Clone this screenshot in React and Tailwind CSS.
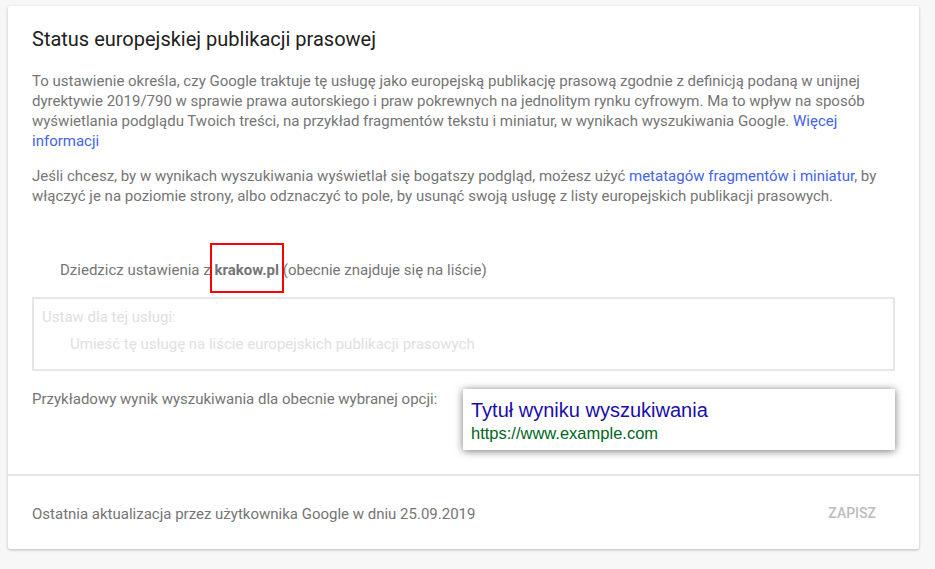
import React from "react";

function SearchPreview() {
  return (
    <div className="mt-px w-[432px] bg-white px-2 pt-[8px] pb-[7px] shadow-[0_1px_8px_rgba(0,0,0,0.55)] font-['Liberation_Sans',Arial,sans-serif]">
      <div className="text-[20px] leading-[26px] text-[#1a0dab]">Tytuł wyniku wyszukiwania</div>
      <div className="text-[16.5px] leading-5 text-[#006621]">https://www.example.com</div>
    </div>
  );
}

export default function App() {
  return (
    <div className="min-h-[569px] bg-[#f7f7f7] pt-[6px] pl-[8px] pb-4 font-['Roboto',sans-serif]">
      <div className="w-[911px] rounded-[2px] bg-white shadow-[0_1px_3px_rgba(0,0,0,0.25)]">
        <div className="px-6 pt-[19px]">
          <h1 className="text-[20px] leading-[28px] text-[#212121]">
            Status europejskiej publikacji prasowej
          </h1>

          <p className="mt-[18px] text-[15px] leading-5 text-[#757575]">
            To ustawienie określa, czy Google traktuje tę usługę jako europejską publikację prasową zgodnie z
            definicją podaną w unijnej dyrektywie 2019/790 w sprawie prawa autorskiego i praw pokrewnych na
            jednolitym rynku cyfrowym. Ma to wpływ na sposób wyświetlania podglądu Twoich treści, na przykład
            fragmentów tekstu i miniatur, w wynikach wyszukiwania Google.{" "}
            <a href="#" className="text-[#4263eb]">Więcej informacji</a>
          </p>

          <p className="mt-[15px] text-[15px] leading-5 text-[#757575]">
            Jeśli chcesz, by w wynikach wyszukiwania wyświetlał się bogatszy podgląd, możesz użyć{" "}
            <a href="#" className="text-[#4263eb]">metatagów fragmentów i miniatur</a>, by włączyć je na poziomie
            strony, albo odznaczyć to pole, by usunąć swoją usługę z listy europejskich publikacji prasowych.
          </p>

          <div className="mt-[54px] pl-7 text-[15px] leading-5 text-[#757575]">
            Dziedzicz ustawienia z{" "}
            <span className="relative inline-block font-bold">
              krakow.pl
              <span className="absolute -left-[4px] -right-[5px] -top-[17px] -bottom-[13px] border-2 border-[#ff0000]"></span>
            </span>{" "}
            (obecnie znajduje się na liście)
          </div>

          <div className="mt-[17px] h-[74px] border-2 border-[#e6e6e6] px-2 pt-[8px] text-[15px] leading-5 text-[#e0e0e0]">
            <div>Ustaw dla tej usługi:</div>
            <div className="mt-[7px] pl-7">Umieść tę usługę na liście europejskich publikacji prasowych</div>
          </div>

          <div className="mt-[17px] flex items-start justify-between pb-[24px]">
            <div className="pt-px text-[15px] leading-5 text-[#757575]">
              Przykładowy wynik wyszukiwania dla obecnie wybranej opcji:
            </div>
            <SearchPreview />
          </div>
        </div>

        <div className="flex items-center justify-between border-t-2 border-[#e6e6e6] pt-[27px] pb-[25px] pl-6 pr-[43px]">
          <div className="text-[15px] leading-5 text-[#757575]">
            Ostatnia aktualizacja przez użytkownika Google w dniu 25.09.2019
          </div>
          <button className="text-[14px] font-medium uppercase text-[#bdbdbd]">Zapisz</button>
        </div>
      </div>
    </div>
  );
}
